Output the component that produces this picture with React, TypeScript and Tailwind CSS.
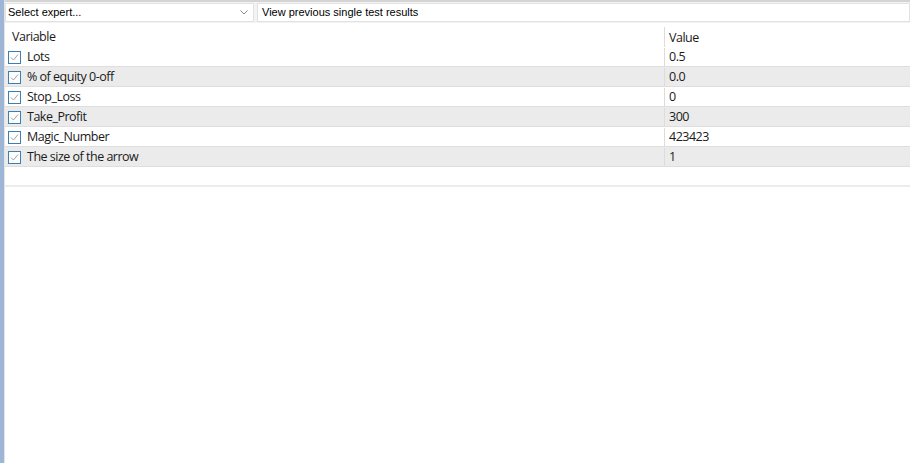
import React from 'react';

const rows = [
  { name: 'Lots', value: '0.5' },
  { name: '% of equity 0-off', value: '0.0' },
  { name: 'Stop_Loss', value: '0' },
  { name: 'Take_Profit', value: '300' },
  { name: 'Magic_Number', value: '423423' },
  { name: 'The size of the arrow', value: '1' },
];

const Check = () => (
  <span className="flex h-[13px] w-[13px] shrink-0 items-center justify-center border border-[#3c7fb1] bg-white">
    <svg width="9" height="9" viewBox="0 0 9 9" fill="none">
      <path d="M1 4.5 L3.5 7 L8 1.5" stroke="#a0a0a0" strokeWidth="1" />
    </svg>
  </span>
);

export default function App() {
  return (
    <div className="flex h-[463px] w-[910px] overflow-hidden bg-white font-['Open_Sans',sans-serif] text-[12.5px] tracking-[-0.5px] text-[#1a1a1a]">
      <div className="w-[4px] shrink-0 bg-[#9db6d6]" />
      <div className="flex min-w-0 flex-1 flex-col border-l border-[#e4e4e4]">
        {/* toolbar */}
        <div className="flex h-[23px] shrink-0 items-center gap-[3px] border-t-2 border-[#d4d4d4] bg-[#f3f3f3] font-['Liberation_Sans',sans-serif] text-[11px] tracking-normal text-black">
          <div className="flex h-[19px] w-[249px] items-center justify-between border border-[#e2e2e2] bg-white pl-[2px] pr-[5px]">
            <span>Select expert...</span>
            <svg width="8" height="5" viewBox="0 0 8 5" fill="none">
              <path d="M0.5 0.5 L4 4 L7.5 0.5" stroke="#8a8a8a" strokeWidth="1" />
            </svg>
          </div>
          <div className="flex h-[19px] flex-1 items-center border border-[#e2e2e2] bg-white pl-[4px]">
            View previous single test results
          </div>
        </div>
        {/* table */}
        <div className="flex flex-col pt-[3px]">
          <div className="flex h-[21px] items-center pt-[1px]">
            <div className="w-[659px] pl-[7px]">Variable</div>
            <div className="h-full border-l border-[#dcdcdc] pl-[4px] leading-[21px]">Value</div>
          </div>
          {rows.map((r, i) => (
            <div
              key={r.name}
              className={`flex h-[20px] items-center border-b border-[#dedede] pt-[1px] ${i % 2 === 1 ? 'bg-[#ebebeb]' : 'bg-white'}`}
            >
              <div className="flex w-[659px] items-center gap-[6px] pl-[3px]">
                <Check />
                <span>{r.name}</span>
              </div>
              <div className="flex h-full items-center border-l border-[#dcdcdc] pl-[4px]">{r.value}</div>
            </div>
          ))}
          <div className="h-[20px] border-b-2 border-[#ececec]" />
        </div>
      </div>
    </div>
  );
}
